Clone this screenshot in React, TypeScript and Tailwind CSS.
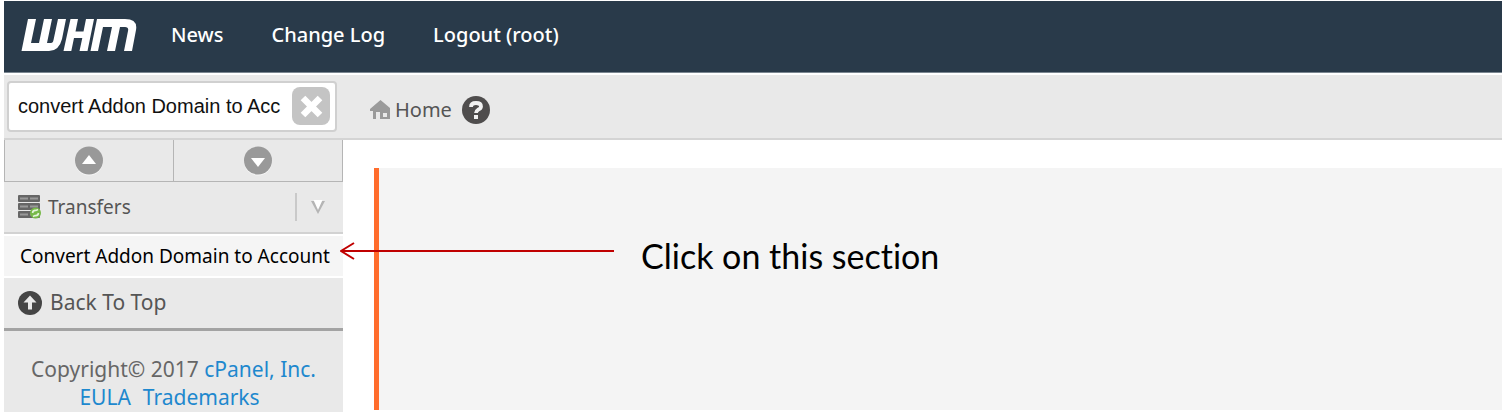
import { useState } from "react";

const NAV_LINKS = [
  { label: "News", href: "#news" },
  { label: "Change Log", href: "#change-log" },
  { label: "Logout (root)", href: "#logout" },
];

function Logo() {
  return (
    <svg viewBox="0 0 116 34" className="h-[34px] w-[116px]" aria-label="WHM" role="img">
      <g fill="#fff">
        <path d="M7 1 H15 L10 25 H18 L23 1 H31 L26 25 H30 Q32 25 32.500 22 L37 1 H45 L41 21 Q38 33 28 33 H0.500 Z" />
        <path d="M49.500 1 H57 L54.500 13.500 H62.500 L65 1 H73 L66.500 33 H58.500 L61.300 20 H53 L50.300 33 H42.500 Z" />
        <path d="M76 1 H104 Q117 1 115 12 L111 33 H103 L107 13 Q108 9 104 9 H99 L94 33 H86 L91 9 H82 L77 33 H69.500 Z" />
      </g>
    </svg>
  );
}

function HomeIcon() {
  return (
    <svg viewBox="0 0 21 20" className="h-5 w-[21px]" aria-hidden="true">
      <path fill="#9a9a9a" d="M10.500 0 L20 8 V19 H10 V12 H6 V19 H3 V11 H0 V9 Z" />
      <path fill="#e9e9e9" d="M13 13 h4 v4 h-4 z" />
    </svg>
  );
}

function HelpIcon() {
  return (
    <svg viewBox="0 0 28 28" className="size-7" aria-hidden="true">
      <circle cx="14" cy="14" r="14" fill="#4f4d4d" />
      <path d="M9 11 Q9 7 14 7 Q19 7 19 10.500 Q19 12.500 16 13.800 Q14 15 14 17" fill="none" stroke="#f2f2f2" strokeWidth="3.800" />
      <rect x="12" y="19" width="4" height="4" fill="#f2f2f2" />
    </svg>
  );
}

function ClearIcon() {
  return (
    <svg viewBox="0 0 38 38" className="size-[38px]" aria-hidden="true">
      <rect width="38" height="38" rx="8" fill="#c4c4c4" />
      <path d="M11 11 L28 28 M28 11 L11 28" stroke="#fff" strokeWidth="6.500" />
    </svg>
  );
}

function ScrollIcon({ down = false }: { down?: boolean }) {
  return (
    <svg viewBox="0 0 30 30" className="size-[30px]" aria-hidden="true">
      <circle cx="15" cy="15.500" r="14" fill="#f6f6f6" />
      <circle cx="15" cy="14.500" r="14" fill="#999" />
      <path d={down ? "M8 12 H22 L15 21 Z" : "M8 18 H22 L15 9 Z"} fill="#fff" />
    </svg>
  );
}

function TransfersIcon() {
  return (
    <svg viewBox="0 0 23 24" className="h-6 w-[23px]" aria-hidden="true">
      {[0, 8, 16].map((y) => (
        <g key={y}>
          <rect x="0" y={y} width="22" height="7" rx="1" fill="#666" />
          <path d={`M2 ${y + 3.5} H10 M12 ${y + 3.5} H20`} stroke="#999" strokeWidth="2" />
        </g>
      ))}
      <circle cx="17.500" cy="18" r="5.500" fill="#76b947" />
      <path d="M14.500 18 Q15 15 18 15.500 L20 14.500 M20.500 18 Q20 21 17 20.500 L15 21.500" fill="none" stroke="#e5f3dc" strokeWidth="1.600" />
    </svg>
  );
}

function TopIcon() {
  return (
    <svg viewBox="0 0 24 24" className="size-6" aria-hidden="true">
      <circle cx="12" cy="12" r="12" fill="#454545" />
      <path d="M12 4.500 L18.500 11.500 H14 V18.500 H10 V11.500 H5.500 Z" fill="#e9e9e9" />
    </svg>
  );
}

function Sidebar() {
  return (
    <aside className="flex w-[339px] shrink-0 flex-col bg-[#e9e9e9] text-[#555]">
      <div className="flex h-[42px] border-x border-b border-[#b5b5b5]">
        <button aria-label="Scroll up" className="flex flex-1 items-center justify-center border-r border-[#b5b5b5]">
          <ScrollIcon />
        </button>
        <button aria-label="Scroll down" className="flex flex-1 items-center justify-center">
          <ScrollIcon down />
        </button>
      </div>
      <button className="flex h-[52px] items-center border-b-2 border-[#d2d2d2] pl-[14px]">
        <TransfersIcon />
        <span className="ml-[7px]">Transfers</span>
        <span className="ml-auto flex h-7 w-12 items-center border-l-2 border-[#c9c9c9] pl-[14px]">
          <svg viewBox="0 0 14 14" className="size-[14px]" aria-hidden="true">
            <path d="M0 1 H14 L7 14 Z" fill="#b5b5b5" />
            <path d="M2.500 0 H11.500 L7 10 Z" fill="#fff" />
          </svg>
        </span>
      </button>
      <a href="#convert-addon" className="flex h-11 items-center border-y-2 border-white bg-[#f5f5f5] pl-4 whitespace-nowrap text-black">
        Convert Addon Domain to Account
      </a>
      <a href="#top" className="flex h-[53px] items-center gap-2 border-b-[3px] border-[#a3a3a3] pl-[14px] text-[21px]">
        <TopIcon />
        Back To Top
      </a>
      <footer className="h-[81px] pt-6 text-center text-[21px] leading-7 text-[#666]">
        <p>
          Copyright© 2017{" "}
          <a href="#cpanel" className="text-[#1e88ce]">cPanel, Inc.</a>
        </p>
        <p className="flex justify-center gap-3 pr-2 text-[#1e88ce]">
          <a href="#eula">EULA</a>
          <a href="#trademarks">Trademarks</a>
        </p>
      </footer>
    </aside>
  );
}

export default function App() {
  const [query, setQuery] = useState("convert Addon Domain to Acc");

  return (
    <div id="top" className="bg-white pt-px pl-1 font-['Noto_Sans',sans-serif] text-[19px]">
      <header className="flex h-[72px] items-center border-b border-[#7b8791] bg-[#293a4a] pb-1 pl-[17px]">
        <Logo />
        <nav className="ml-[34px] flex gap-12 text-xl font-medium text-white">
          {NAV_LINKS.map((link) => (
            <a key={link.label} href={link.href}>
              {link.label}
            </a>
          ))}
        </nav>
      </header>

      <div className="mt-0.5 flex h-[65px] items-center border-b-2 border-[#d4d4d4] bg-[#e9e9e9]">
        <div className="ml-[3px] flex h-[51px] w-[330px] items-center rounded border-2 border-[#d0d0d0] bg-white pr-[5px] pb-0.5 pl-[9px]">
          <input
            aria-label="Search"
            value={query}
            onChange={(e) => setQuery(e.target.value)}
            className="min-w-0 flex-1 font-['Liberation_Sans',sans-serif] text-xl text-[#111] outline-none"
          />
          <button aria-label="Clear search" onClick={() => setQuery("")} className="ml-[3px]">
            <ClearIcon />
          </button>
        </div>
        <a href="#home" className="ml-[33px] flex items-center gap-1 pt-1.5 text-[#555]">
          <HomeIcon />
          <span className="text-xl">Home</span>
        </a>
        <button aria-label="Help" className="ml-[10px] pt-1.5">
          <HelpIcon />
        </button>
      </div>

      <div className="flex">
        <Sidebar />
        <main className="relative mt-7 mb-0.5 ml-[31px] flex-1 border-l-[5px] border-[#ff6c2c] bg-[#f4f4f4] pt-16 pl-[262px]">
          <svg viewBox="0 0 274 18" className="absolute top-[74px] -left-[39px] h-[18px] w-[274px]" aria-hidden="true">
            <path d="M274 9 H1 M14 1 L1 9 L14 17" fill="none" stroke="#c00000" strokeWidth="2" />
          </svg>
          <p className="font-[Lato,sans-serif] text-[34px] leading-[48px] text-black [font-variant-ligatures:none]">Click on this section</p>
        </main>
      </div>
    </div>
  );
}
